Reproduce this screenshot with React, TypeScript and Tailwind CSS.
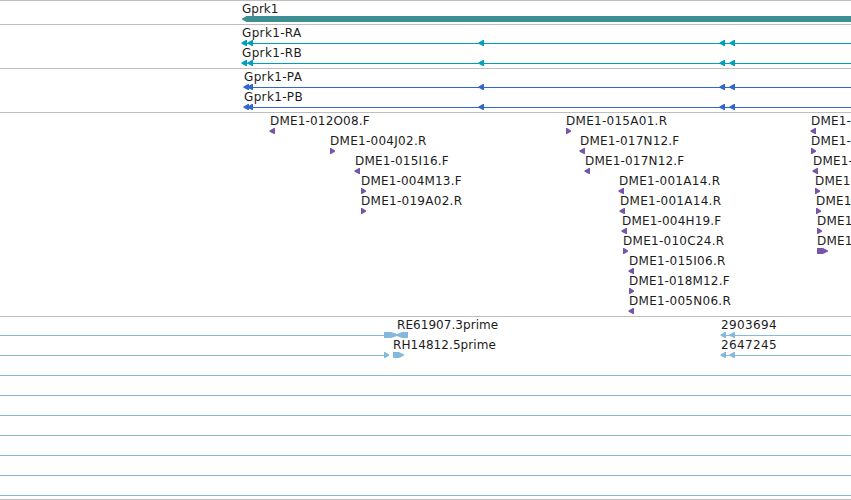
type Glyph = { x: number; w?: number; shape: keyof typeof shapes };
type Label = { x: number; text: string; tracking?: string };
type Span = { from: number; to: number };
type Row = { labels?: Label[]; glyphs?: Glyph[]; lines?: Span[] };

const WIDTH = 851;

// outlines are drawn in a 6px high strip, w is the glyph width
const shapes = {
  left: (w: number) => `0,2.4 ${w - 1},0 ${w},0 ${w},6 ${w - 1},6 0,3.8`,
  right: (w: number) => `0,0 1,0 ${w},2.4 ${w},3.8 1,6 0,6`,
  blockLeft: (w: number) => `0,2.4 4.5,0 ${w},0 ${w},6 4.5,6 0,3.6`,
  blockRight: (w: number) => `0,0 ${w - 5},0 ${w},2.4 ${w},3.6 ${w - 5},6 0,6`,
  bow: (w: number) => `0,0 7,0 ${w / 2 + 1},2 18,0 ${w},0 ${w},6 18,6 ${w / 2 + 1},4 7,6 0,6`,
};

const L = (x: number, w = 5.5): Glyph => ({ x, w, shape: "left" });
const R = (x: number, w = 5): Glyph => ({ x, w, shape: "right" });

const geneRows: Row[] = [
  { labels: [{ x: 242, text: "Gprk1" }], glyphs: [{ x: 242, w: 609, shape: "blockLeft" }] },
];

const transcriptRows: Row[] = ["Gprk1-RA", "Gprk1-RB"].map((text) => ({
  labels: [{ x: 242, text, tracking: "tracking-[0.35px]" }],
  lines: [{ from: 247, to: WIDTH }],
  glyphs: [L(241.5), L(247.5), L(478.5), L(719.5), L(729.5)],
}));

const proteinRows: Row[] = ["Gprk1-PA", "Gprk1-PB"].map((text) => ({
  labels: [{ x: 244, text, tracking: "tracking-[0.35px]" }],
  lines: [{ from: 249, to: WIDTH }],
  glyphs: [L(243.5), L(247.5), L(478.5), L(719.5), L(729.5)],
}));

// labels on the right run up to the edge of the view
const clones: [number, string, "L" | "R" | "B"][][] = [
  [[270, "DME1-012O08.F", "L"], [566, "DME1-015A01.R", "R"], [811, "DME1-", "L"]],
  [[330, "DME1-004J02.R", "R"], [580, "DME1-017N12.F", "L"], [811, "DME1-", "R"]],
  [[355, "DME1-015I16.F", "L"], [585, "DME1-017N12.F", "L"], [813, "DME1-", "L"]],
  [[361, "DME1-004M13.F", "R"], [619, "DME1-001A14.R", "L"], [815, "DME1-", "R"]],
  [[361, "DME1-019A02.R", "R"], [620, "DME1-001A14.R", "L"], [816, "DME1", "R"]],
  [[622, "DME1-004H19.F", "L"], [817, "DME1", "R"]],
  [[623, "DME1-010C24.R", "R"], [817, "DME1", "B"]],
  [[629, "DME1-015I06.R", "L"]],
  [[629, "DME1-018M12.F", "R"]],
  [[629, "DME1-005N06.R", "L"]],
];

const cloneRows: Row[] = clones.map((row) => ({
  labels: row.map(([x, text]) => ({
    x,
    text,
    tracking: text.endsWith(".R") ? "tracking-[0.28px]" : "tracking-[0.18px]",
  })),
  glyphs: row.map(([x, , kind]) => {
    if (kind === "B") return { x, w: 11, shape: "blockRight" as const };
    return kind === "L" ? L(x - 0.5) : R(x);
  }),
}));

const estRows: Row[] = [
  {
    labels: [
      { x: 397, text: "RE61907.3prime", tracking: "tracking-[0.05px]" },
      { x: 721, text: "2903694", tracking: "tracking-[0.35px]" },
    ],
    lines: [{ from: 0, to: 384 }, { from: 721, to: WIDTH }],
    glyphs: [{ x: 384, w: 24, shape: "bow" }, L(720.5), L(729.5)],
  },
  {
    labels: [
      { x: 393, text: "RH14812.5prime", tracking: "tracking-[0.07px]" },
      { x: 721, text: "2647245", tracking: "tracking-[0.35px]" },
    ],
    lines: [{ from: 0, to: 384 }, { from: 721, to: WIDTH }],
    glyphs: [R(384), { x: 393, w: 11, shape: "blockRight" }, L(720.5), L(729.5)],
  },
  ...Array.from({ length: 7 }, () => ({ lines: [{ from: 0, to: WIDTH }] })),
];

function TrackRow({ row }: { row: Row }) {
  return (
    <div className="relative h-5">
      <svg className="absolute top-[15px] left-0 h-1.5 w-full" viewBox={`0 0 ${WIDTH} 6`} fill="currentColor">
        {row.lines?.map((line) => (
          <rect key={line.from} x={line.from} y={3} width={line.to - line.from} height={1} />
        ))}
        {row.glyphs?.map((g) => (
          <polygon key={g.x} transform={`translate(${g.x} 0)`} points={shapes[g.shape](g.w ?? 6)} />
        ))}
      </svg>
      {row.labels?.map((label) => (
        <span
          key={label.x}
          className={`absolute top-0 text-xs leading-4 whitespace-nowrap text-[#1c1c1c] ${label.tracking ?? ""}`}
          style={{ left: label.x }}
        >
          {label.text}
        </span>
      ))}
    </div>
  );
}

function Track({ rows, className }: { rows: Row[]; className: string }) {
  return (
    <section className={`shrink-0 overflow-hidden border-t border-[#bebebe] ${className}`}>
      {rows.map((row, i) => (
        <TrackRow key={i} row={row} />
      ))}
    </section>
  );
}

export default function App() {
  return (
    <main className="flex h-[500px] w-[851px] flex-col overflow-hidden border-b border-[#bebebe] bg-white font-['DejaVu_Sans',sans-serif]">
      <Track rows={geneRows} className="h-6 text-[#3d8f94]" />
      <Track rows={transcriptRows} className="h-11 text-[#009fbf]" />
      <Track rows={proteinRows} className="h-11 text-[#3366cc]" />
      <Track rows={cloneRows} className="h-[204px] text-[#7755aa]" />
      <Track rows={estRows} className="h-[183px] text-[#84b8dc]" />
    </main>
  );
}
